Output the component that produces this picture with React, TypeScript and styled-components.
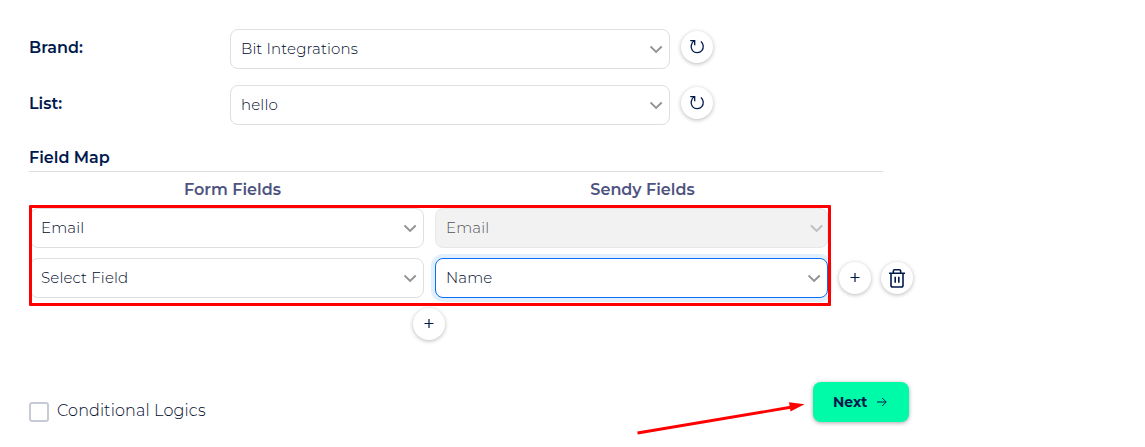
import React from 'react';
import styled, { createGlobalStyle, css } from 'styled-components';

const GlobalStyle = createGlobalStyle`
  * { box-sizing: border-box; }
  body { margin: 0; background: #fff; }
`;

const Page = styled.main`
  position: relative;
  width: 1145px;
  height: 447px;
  overflow: hidden;
  padding: 29px 0 0 29px;
  font-family: Montserrat, Inter, sans-serif;
  font-size: 15px;
  color: #00194c;
`;

const Label = styled.span`
  font-size: 16px;
  font-weight: 600;
  line-height: 20px;
`;

const SettingRow = styled.div`
  display: grid;
  grid-template-columns: 201px 440px 43px;
  height: 40px;
  margin-bottom: 16px;

  ${Label} { margin-top: 9px; }
  button { margin: 2px 0 0 11px; }
`;

const SelectBox = styled.div<{ $state?: 'focused' | 'disabled' }>`
  display: flex;
  align-items: center;
  justify-content: space-between;
  height: 40px;
  padding: 0 6px 0 10px;
  border: 1px solid #dfdfe0;
  border-radius: 8px;
  background: #fff;
  color: #000a2b;

  ${(p) => p.$state === 'focused' && css`
    border-color: #0b6cf5;
    box-shadow: 0 0 0 4px #e2f0fd;
  `}
  ${(p) => p.$state === 'disabled' && css`
    padding-right: 3px;
    border-color: #e7e7e7;
    background: #f2f2f2;
    color: #555;
  `}
`;

const Value = styled.span`
  font-size: 15px;
  font-weight: 300;
  line-height: 20px;
  letter-spacing: 0.15px;
  white-space: nowrap;
`;

const RoundButton = styled.button`
  display: grid;
  place-items: center;
  width: 32px;
  height: 32px;
  padding: 0;
  border: 0;
  border-radius: 50%;
  background: #fff;
  color: #00194c;
  box-shadow: 0 1px 4px rgba(0, 0, 0, 0.28);
`;

const SectionTitle = styled.div`
  width: 854px;
  height: 31px;
  padding-top: 7px;
  border-bottom: 1px solid #dfdfe0;
`;

const ColumnTitles = styled.div`
  display: grid;
  grid-template-columns: 393px 393px;
  column-gap: 17px;
  height: 36px;
  margin-left: 7px;
  padding-top: 8px;
  text-align: center;
  color: #4e5380;
`;

const FieldRow = styled.div`
  display: grid;
  grid-template-columns: 394px 393px 32px 32px;
  column-gap: 11px;
  align-items: center;
  height: 40px;
  margin: 0 0 10px 1px;

  button:last-child { margin-left: -1px; }
`;

const AddRow = styled.div`
  display: flex;
  width: 800px;
  height: 36px;
  justify-content: center;
`;

const Footer = styled.div`
  display: flex;
  justify-content: space-between;
  width: 880px;
  margin-top: 38px;
`;

const CheckLabel = styled.label`
  display: flex;
  gap: 8px;
  padding-top: 20px;
`;

const Checkbox = styled.span`
  width: 20px;
  height: 20px;
  border: 2px solid #c7cbd6;
  border-radius: 3px;
`;

const CheckText = styled.span`
  margin-top: -1px;
  color: #000a2b;
  font-size: 16px;
  font-weight: 300;
  line-height: 20px;
  letter-spacing: 0.15px;
`;

const NextButton = styled.button`
  display: flex;
  align-items: center;
  gap: 10px;
  width: 96px;
  height: 40px;
  padding: 0 0 0 20px;
  border: 0;
  border-radius: 8px;
  background: #00fba8;
  color: #00194c;
  box-shadow: 0 1px 4px rgba(0, 0, 0, 0.35);
  font: 700 14px Montserrat, Inter, sans-serif;
`;

const Highlight = styled.div`
  position: absolute;
  left: 29px;
  top: 205px;
  width: 802px;
  height: 101px;
  border: 3px solid #fe0000;
  border-radius: 1px;
`;

const Pointer = styled.svg`
  position: absolute;
  left: 630px;
  top: 396px;
`;

const Chevron = ({ muted = false }: { muted?: boolean }) => (
  <svg width={muted ? 14 : 13} height="9" viewBox="0 0 13 9" fill="none" stroke={muted ? '#bdbec1' : '#929292'} strokeWidth="1.9">
    <path d="M.5 1.5 6.1 7l5.6-5.5" />
  </svg>
);

const RefreshIcon = () => (
  <svg width="16" height="16" viewBox="0 0 16 16" fill="none" stroke="currentColor" strokeWidth="1.3">
    <path d="M1.2 1.6h4.5v4.6M5.4 1.8C2 3.6 1.1 8.8 3.5 11.6c2.4 2.8 7 2.8 9.3.1 2.2-2.7 1.9-7-.9-9.2" />
  </svg>
);

const PlusIcon = () => (
  <svg width="10" height="10" viewBox="0 0 10 10" stroke="currentColor" strokeWidth="1.2">
    <path d="M.5 4.5h9M5 0v9" />
  </svg>
);

const TrashIcon = () => (
  <svg width="18" height="20" viewBox="0 0 18 20" fill="none" stroke="currentColor" strokeWidth="1.6">
    <path d="M1 5.2h16M5.3 5V3.2q0-1.4 1.4-1.4h4.6q1.4 0 1.4 1.4V5M3 5.2v12q0 1.8 1.8 1.8h8.4q1.8 0 1.8-1.8v-12M7.2 8.8v6M10.8 8.8v6" />
  </svg>
);

const ArrowIcon = () => (
  <svg width="10" height="10" viewBox="0 0 10 10" fill="none" stroke="currentColor" strokeWidth="1">
    <path d="M0 5h9M5.2 1 9.2 5l-4 4" />
  </svg>
);

interface SelectProps {
  value: string;
  state?: 'focused' | 'disabled';
}

const Select = ({ value, state }: SelectProps) => (
  <SelectBox $state={state}>
    <Value>{value}</Value>
    <Chevron muted={state === 'disabled'} />
  </SelectBox>
);

export default function App() {
  return (
    <Page>
      <GlobalStyle />
      <SettingRow>
        <Label>Brand:</Label>
        <Select value="Bit Integrations" />
        <RoundButton aria-label="Refresh brands"><RefreshIcon /></RoundButton>
      </SettingRow>
      <SettingRow>
        <Label>List:</Label>
        <Select value="hello" />
        <RoundButton aria-label="Refresh lists"><RefreshIcon /></RoundButton>
      </SettingRow>

      <SectionTitle><Label>Field Map</Label></SectionTitle>
      <ColumnTitles>
        <Label>Form Fields</Label>
        <Label>Sendy Fields</Label>
      </ColumnTitles>
      <FieldRow>
        <Select value="Email" />
        <Select value="Email" state="disabled" />
      </FieldRow>
      <FieldRow>
        <Select value="Select Field" />
        <Select value="Name" state="focused" />
        <RoundButton aria-label="Add field"><PlusIcon /></RoundButton>
        <RoundButton aria-label="Delete field"><TrashIcon /></RoundButton>
      </FieldRow>
      <AddRow>
        <RoundButton aria-label="Add row"><PlusIcon /></RoundButton>
      </AddRow>

      <Footer>
        <CheckLabel>
          <Checkbox />
          <CheckText>Conditional Logics</CheckText>
        </CheckLabel>
        <NextButton>Next <ArrowIcon /></NextButton>
      </Footer>

      <Highlight />
      <Pointer width="180" height="44" viewBox="0 0 180 44">
        <path d="M7.5 37 162 11" stroke="#fe0000" strokeWidth="2.8" />
        <path d="M159 6.3 174.5 8.2 160.5 15.4Z" fill="#fe0000" />
      </Pointer>
    </Page>
  );
}
